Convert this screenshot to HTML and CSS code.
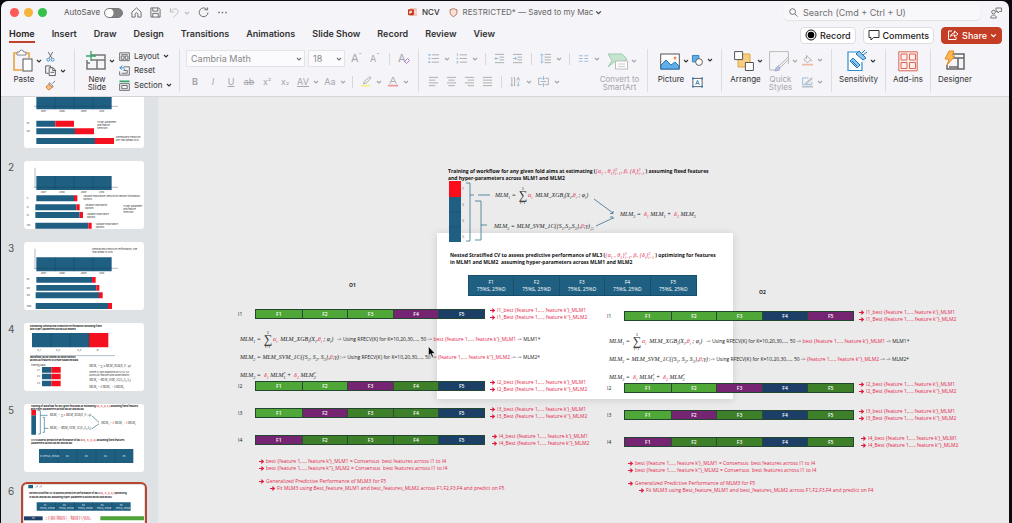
FILE: index.html
```html
<!DOCTYPE html>
<html lang="en">
<head>
<meta charset="utf-8">
<title>NCV</title>
<link rel="stylesheet" href="styles.css">
</head>
<body>
<svg class="defs" aria-hidden="true">
  <symbol id="chev" viewBox="0 0 6 6"><path d="M1 2l2 2 2-2" fill="none" stroke="currentColor" stroke-width="1.1"/></symbol>
  <symbol id="arrow" viewBox="0 0 5 5"><path d="M0 2.500h4M2.300.6l2 1.900-2 1.900" fill="none" stroke="currentColor" stroke-width="1.200"/></symbol>
</svg>
<div class="window">
  <header class="titlebar">
    <div class="lights"><i class="red"></i><i class="amber"></i><i class="green"></i></div>
    <div class="quick">
      <label class="autosave">AutoSave <input type="checkbox"></label>
      <button aria-label="Home"><svg viewBox="0 0 12 12"><path d="M1 5.500L6 1l5 4.500V11H7.500V8a1.500 1.500 0 0 0-3 0v3H1z"/></svg></button>
      <button aria-label="Save"><svg viewBox="0 0 12 12"><path d="M1 1h8.500L11 2.500V11H1zM3 1v3.500h5.500V1M3 11V7h6v4"/></svg></button>
      <button class="dim" aria-label="Undo"><svg viewBox="0 0 12 12"><path d="M1.500 1v4.500H6M1.500 5C4 1.500 9 1 9.800 4 10.500 6.500 8 8.500 5 11"/></svg></button>
      <button class="dim mini" aria-label="Undo options"><svg viewBox="0 0 6 6"><use href="#chev"/></svg></button>
      <button aria-label="Repeat"><svg viewBox="0 0 12 12"><path d="M10 3a4.800 4.800 0 1 0 .9 3M7 3h3.500V.5"/></svg></button>
      <button aria-label="More"><svg viewBox="0 0 12 12"><path d="M1.500 6h1.500M5.200 6h1.500M9 6h1.500" stroke-width="1.600"/></svg></button>
    </div>
    <div class="doc">
      <svg viewBox="0 0 10 10"><rect x="2" width="8" height="9" rx="1" fill="#f2c5b8"/><rect y="1.500" width="6.500" height="6.500" rx="1" fill="#c3371d"/><path d="M2 6.500v-3h2v1.500H2M7.500 4.500h2" stroke="#fff" fill="none"/></svg>
      <b>NCV</b>
      <svg viewBox="0 0 10 10"><path d="M5 .7l3.800 1.200v3C8.800 7 7 8.700 5 9.500 3 8.700 1.200 7 1.200 4.900v-3z" fill="#f8e3d8" stroke="#b4694a"/></svg>
      <span>RESTRICTED* — Saved to my Mac</span>
      <svg class="c" viewBox="0 0 6 6"><use href="#chev"/></svg>
    </div>
    <label class="search"><svg viewBox="0 0 10 10"><circle cx="4" cy="4" r="3.200"/><path d="M6.400 6.400L9.500 9.500"/></svg><input type="text" aria-label="Search" placeholder="Search (Cmd + Ctrl + U)"></label>
    <button class="people" aria-label="Presence"><svg viewBox="0 0 12 12"><circle cx="3.500" cy="5" r="1.800"/><path d="M.7 11c0-4 5.600-4 5.600 0zM6 1h5.500v3.500H9.500L8 6V4.500H6z"/></svg></button>
  </header>

  <nav class="tabs">
    <a class="on" href="#">Home</a><a href="#">Insert</a><a href="#">Draw</a><a href="#">Design</a><a href="#">Transitions</a><a href="#">Animations</a><a href="#">Slide Show</a><a href="#">Record</a><a href="#">Review</a><a href="#">View</a>
    <div class="actions">
      <button><svg viewBox="0 0 12 12"><circle cx="6" cy="6" r="5" fill="none" stroke="#111"/><circle cx="6" cy="6" r="3.300" fill="#000"/></svg>Record</button>
      <button><svg viewBox="0 0 12 12"><path d="M1 1.500h10v7H5.500L3 11V8.500H1z" fill="none" stroke="#333"/></svg>Comments</button>
      <button class="share"><svg viewBox="0 0 12 12"><path d="M5 2H1.500v8.500H9V8M3.500 7.500C4 5 5.500 4 7.500 4V2L11 5 7.500 7.800V6C6 6 4.500 6.300 3.500 7.500z" fill="none" stroke="#fff"/></svg>Share<svg class="c" viewBox="0 0 6 6"><use href="#chev"/></svg></button>
    </div>
  </nav>

  <div class="ribbon">
    <section class="group clip">
      <button class="big"><span><svg viewBox="0 0 20 22"><path d="M4 3H1v17h8M13 3h3v5" fill="none" stroke="#e8a33d" stroke-width="1.600"/><path d="M4 2h2.500a2 2 0 0 1 4 0H13v3H4z" fill="#fff" stroke="#888"/><rect x="10" y="9" width="9" height="12" fill="#fff" stroke="#555"/></svg><svg class="c" viewBox="0 0 6 6"><use href="#chev"/></svg></span>Paste</button>
      <div class="stack">
        <button aria-label="Cut"><svg viewBox="0 0 12 12"><path d="M3.500 1l4 7M8.500 1l-4 7" fill="none" stroke="#666"/><circle cx="3.700" cy="9.500" r="1.600" fill="none" stroke="#3a8fc8"/><circle cx="8.300" cy="9.500" r="1.600" fill="none" stroke="#3a8fc8"/></svg></button>
        <button aria-label="Copy"><svg viewBox="0 0 12 12"><path d="M4 9H.7V1H6v2M4.500 3H9l2.300 2.500v6H4.500zM8.500 3v3h3M6 8h4" fill="none" stroke="#555"/></svg><svg class="c" viewBox="0 0 6 6"><use href="#chev"/></svg></button>
        <button aria-label="Format painter"><svg viewBox="0 0 12 12"><path d="M11 1L8 4M5 3l4 4-1.500 1L4 4.500z" fill="none" stroke="#777"/><path d="M4 5L1 7.500 4 11l4-3z" fill="#f6c18f" stroke="#d9761e"/></svg></button>
      </div>
    </section>
    <section class="group slides">
      <button class="big"><span><svg viewBox="0 0 20 22"><path d="M5 5h14v14H1V10M5 10h14M11 10v9M1 13h3" fill="none" stroke="#777" stroke-width="1.500"/><path d="M5 1v10M0 6h10" stroke="#32a567" stroke-width="1.300"/></svg><svg class="c" viewBox="0 0 6 6"><use href="#chev"/></svg></span>New<br>Slide</button>
      <div class="stack wide">
        <button><svg viewBox="0 0 12 12"><path d="M.7 2h10.600v8.500H.7zM2.500 4h7M2.500 5.500h3v3.500h-3zM6.800 5.500h3v3.500h-3z" fill="none" stroke="#666"/></svg>Layout<svg class="c" viewBox="0 0 6 6"><use href="#chev"/></svg></button>
        <button><svg viewBox="0 0 12 12"><path d="M5 2h6.300v9H.7V7M5 6h4v3H3" fill="none" stroke="#666"/><path d="M3.500.5L1 3l2.500 2.300M1 3h3c2 0 2 2 2 3" fill="none" stroke="#2b88c8"/></svg>Reset</button>
        <button><svg viewBox="0 0 12 12"><path d="M.5.500h11v2H.5z" fill="#32a567"/><path d="M.7 4h10.600v7.300H.7zM3 6h6v3.500H3z" fill="none" stroke="#666"/></svg>Section<svg class="c" viewBox="0 0 6 6"><use href="#chev"/></svg></button>
      </div>
    </section>
    <section class="group font dim">
      <div class="row">
        <span class="combo name"><select aria-label="Font"><option>Cambria Math</option></select><svg class="c" viewBox="0 0 6 6"><use href="#chev"/></svg></span>
        <span class="combo size"><select aria-label="Font size"><option>18</option></select><svg class="c" viewBox="0 0 6 6"><use href="#chev"/></svg></span>
        <button class="ltr">A<sup>ˆ</sup></button><button class="ltr small">A<sup>ˇ</sup></button><i class="bar"></i>
        <button class="ltr">A<svg class="tiny" viewBox="0 0 6 6"><path d="M3.500.5l2 2-3 3-2-2z" fill="none" stroke="#b77cc4"/></svg></button>
      </div>
      <div class="row fmt">
        <button><b>B</b></button><button><em>I</em></button><button><u>U</u></button><button><s>ab</s></button><button>x<sup>²</sup></button><button>x<sub>₂</sub></button><button><u>AV</u></button><svg class="c" viewBox="0 0 6 6"><use href="#chev"/></svg><button>Aa</button><svg class="c" viewBox="0 0 6 6"><use href="#chev"/></svg><i class="bar"></i>
        <button aria-label="Highlight"><svg viewBox="0 0 12 12"><path d="M0 9.500h10v2H0z" fill="#f3f08a"/><path d="M10 .7L4 5.500l-1.500 3L6 7.500l5-5.500z" fill="none" stroke="#aaa"/></svg></button><svg class="c" viewBox="0 0 6 6"><use href="#chev"/></svg>
        <button aria-label="Font color"><svg viewBox="0 0 12 12"><path d="M2 8.500L5.500 1 9 8.500M3.300 6h4.400" fill="none" stroke="#aaa"/><path d="M0 9.500h11v2H0z" fill="#e99a9a"/></svg></button><svg class="c" viewBox="0 0 6 6"><use href="#chev"/></svg>
      </div>
    </section>
    <section class="group para dim">
      <div class="row">
        <button aria-label="Bullets"><svg viewBox="0 0 12 12"><path d="M4 2h8M4 6h8M4 10h8"/><path d="M.5 2h2M.5 6h2M.5 10h2" stroke="#8db9dc" stroke-width="1.800"/></svg></button><svg class="c" viewBox="0 0 6 6"><use href="#chev"/></svg>
        <button aria-label="Numbering"><svg viewBox="0 0 12 12"><path d="M4 2h8M4 6h8M4 10h8"/><path d="M1.500.5v2.500M.7 5.500h1v1h-1M.7 9h1v2h-1" stroke="#8db9dc"/></svg></button><svg class="c" viewBox="0 0 6 6"><use href="#chev"/></svg><i class="bar"></i>
        <button aria-label="Decrease indent"><svg viewBox="0 0 12 12"><path d="M1 1.500h10M6 4.500h5M6 7.500h5M1 10.500h10"/><path d="M5 6H1M2.500 4.500L1 6l1.500 1.500" stroke="#8db9dc"/></svg></button>
        <button aria-label="Increase indent"><svg viewBox="0 0 12 12"><path d="M1 1.500h10M6 4.500h5M6 7.500h5M1 10.500h10"/><path d="M1 6h4M3.500 4.500L5 6 3.500 7.500" stroke="#8db9dc"/></svg></button><i class="bar"></i>
        <button aria-label="Line spacing"><svg viewBox="0 0 12 12"><path d="M5 1.500h7M5 4.500h7M5 7.500h7M5 10.500h7"/><path d="M2 1v10M.5 2.500L2 1l1.500 1.500M.5 9.500L2 11l1.500-1.500" stroke="#8db9dc"/></svg></button><svg class="c" viewBox="0 0 6 6"><use href="#chev"/></svg><i class="bar"></i>
        <button aria-label="Columns"><svg viewBox="0 0 12 12"><path d="M1 3h4M1 6h4M1 9h4M7 3h4M7 6h4M7 9h4" stroke="#8db9dc"/></svg></button><svg class="c" viewBox="0 0 6 6"><use href="#chev"/></svg>
      </div>
      <div class="row aligns">
        <button aria-label="Align left"><svg viewBox="0 0 12 12"><path d="M1 1.500h10M1 4.500h7M1 7.500h10M1 10.500h7"/></svg></button>
        <button aria-label="Center"><svg viewBox="0 0 12 12"><path d="M1 1.500h10M2.500 4.500h7M1 7.500h10M2.500 10.500h7"/></svg></button>
        <button aria-label="Align right"><svg viewBox="0 0 12 12"><path d="M1 1.500h10M4 4.500h7M1 7.500h10M4 10.500h7"/></svg></button>
        <button aria-label="Justify"><svg viewBox="0 0 12 12"><path d="M1 1.500h10M1 4.500h10M1 7.500h10M1 10.500h10"/></svg></button><i class="bar"></i>
        <button aria-label="Text direction"><svg viewBox="0 0 12 12"><path d="M2 1v10M5 1v10M.5 9.500L2 11l1.500-1.500M7.500 5L9 1.500 10.500 5"/><path d="M9 6v5M7.500 9.500L9 11l1.500-1.500" stroke="#8db9dc"/></svg></button><svg class="c" viewBox="0 0 6 6"><use href="#chev"/></svg>
        <button aria-label="Align text"><svg viewBox="0 0 12 12"><path d="M4 2.500H.7v7H4M8 2.500h3.300v7H8M3 6h6"/><path d="M6 0v4M6 8v4M4.500 2.500L6 4l1.500-1.500M4.500 9.500L6 8l1.500 1.500" stroke="#8db9dc"/></svg></button><svg class="c" viewBox="0 0 6 6"><use href="#chev"/></svg>
      </div>
    </section>
    <button class="big dim smart"><span><svg viewBox="0 0 20 22"><path d="M0 4h14l5 5-4 3H6l-6 5 4-6.500z" fill="#c5e5cf" stroke="#9fcbb0"/><rect x="7.500" y="11" width="12" height="8" fill="#fff" stroke="#bbb"/><path d="M10 14h7M10 16.500h7" stroke="#ccc"/></svg><svg class="c" viewBox="0 0 6 6"><use href="#chev"/></svg></span>Convert to<br>SmartArt</button>
    <section class="group insert">
      <button class="big"><span><svg viewBox="0 0 20 22"><rect x=".7" y="4" width="18.600" height="15" fill="#fff" stroke="#555"/><path d="M1 15l5-5 5 5 4-3 4 4v3H1z" fill="#62aee6" stroke="#2377b8"/><circle cx="15" cy="8" r="1.500" fill="#f08b5a"/></svg><svg class="c" viewBox="0 0 6 6"><use href="#chev"/></svg></span>Picture</button>
      <div class="pair">
        <button aria-label="Shapes"><svg viewBox="0 0 12 12"><path d="M.5.500h7v7h-7z" fill="#62aee6" stroke="#2b7fc0"/><circle cx="7.700" cy="7.700" r="3.700" fill="#fff" stroke="#555"/></svg><svg class="c" viewBox="0 0 6 6"><use href="#chev"/></svg></button>
        <button aria-label="Text box"><svg viewBox="0 0 12 12"><rect x="1" y="1.500" width="10" height="9" fill="#fff" stroke="#555"/><path d="M4 8.500L6 3.500l2 5M4.700 7h2.600" fill="none" stroke="#2b7fc0"/><path d="M0 .500h2v2H0zM10 .500h2v2h-2zM0 9.500h2v2H0zM10 9.500h2v2h-2z" fill="#2b7fc0"/></svg></button>
      </div>
    </section>
    <section class="group arrange">
      <button class="big"><span><svg viewBox="0 0 20 22"><path d="M4 4h12v13H4z" fill="#f7cf83" stroke="#e2a641"/><path d="M.6 1.600h8v8h-8zM11.400 12.500h8v8h-8z" fill="#fff" stroke="#555"/></svg><svg class="c" viewBox="0 0 6 6"><use href="#chev"/></svg></span>Arrange</button>
      <button class="big dim"><span><svg viewBox="0 0 20 22"><path d="M11 20H.6V1.600h18.800V14" fill="none" stroke="#bbb"/><path d="M19 7l-8 8-2 1 1 2 2-1 8-8z" fill="#eee" stroke="#bbb"/><path d="M6 21c1-4 2-5 4-4s0 4-4 4z" fill="#b7c3e6" stroke="#9caad4"/></svg><svg class="c" viewBox="0 0 6 6"><use href="#chev"/></svg></span>Quick<br>Styles</button>
      <div class="pair dim">
        <button aria-label="Shape fill"><svg viewBox="0 0 12 12"><path d="M2 5l4-3.500L9.500 5 6 8.500zM5 0v4M10 5v2" fill="none" stroke="#aaa"/><path d="M0 9.500h12v2H0z" fill="#f0b9a3"/></svg><svg class="c" viewBox="0 0 6 6"><use href="#chev"/></svg></button>
        <button aria-label="Shape outline"><svg viewBox="0 0 12 12"><path d="M7 1H.7v7h10V5" fill="none" stroke="#8db9dc"/><path d="M10.500 1L5 5.500 4 7l2-.5L11 2z" fill="none" stroke="#aaa"/><path d="M0 9.500h12v2H0z" fill="#b4bfc6"/></svg><svg class="c" viewBox="0 0 6 6"><use href="#chev"/></svg></button>
      </div>
    </section>
    <section class="group sens"><button class="big"><span><svg viewBox="0 0 20 22"><path d="M12 2H1v18.500h14V12" fill="#fff" stroke="#2b8fd0" stroke-width="1.200"/><path d="M3 11l3-3 7 7-3 3zM9 4l3-3 7 7-3 2z" fill="#8cc6ec" stroke="#2377b8"/><path d="M14 4l4-4M16 5l4-3M5 11l5 5" stroke="#2377b8"/></svg><svg class="c" viewBox="0 0 6 6"><use href="#chev"/></svg></span>Sensitivity</button></section>
    <section class="group addins"><button class="big"><span><svg viewBox="0 0 20 22"><path d="M.8 1.800h18.400v19H.8zM3 4h6v6H3zM11.500 4h6v6h-6zM3 12.500h6v6H3zM11.500 12.500h6v6h-6z" fill="#fdeeea" stroke="#d9685a"/></svg></span>Add-ins</button></section>
    <section class="group last"><button class="big"><span><svg viewBox="0 0 20 22"><path d="M8 4h11v15H2v-4M6 8h13M13 8v11M4 17h9" fill="none" stroke="#666" stroke-width="1.500"/><path d="M4 1h5L7 6h3L2 15l2-6H0z" fill="#f9b950" stroke="#e58a24"/></svg></span>Designer</button></section>
  </div>

  <main class="work">
    <ol class="thumbs">
      <li><span></span><svg viewBox="0 0 360 204"><path class="t" d="M37 45h226v43H37zM37 122h57v18H37zM37 145h116v18H37zM37 174h176v18H37z"/><path class="r" d="M94 122h56v18H94zM153 145h57v18h-57zM213 174h57v18h-57z"/><path class="g" d="M93 45v43M150 45v43M207 45v43M30 79h252"/><g class="tx"><text x="50" y="97">2007</text><text x="105" y="97">2008</text><text x="170" y="97">2009</text><text x="225" y="97">2010</text><text x="8" y="133">O1</text><text x="8" y="156">O2</text><text x="220" y="128">Hyper-parameter</text><text x="220" y="137">and feature</text><text x="220" y="146">selection</text><text x="275" y="175">Generalized Predictive</text><text x="275" y="184">one year ahead 2010</text></g></svg></li>
      <li><span>2</span><svg viewBox="0 0 360 204"><path class="t" d="M37 45h226v42H37zM37 103h113v18H37zM34 130h123v18H34zM34 153h133v18H34zM34 185h159v18H34z"/><path class="r" d="M150 103h10v18h-10zM157 130h10v18h-10zM167 153h10v18h-10zM193 185h10v18h-10z"/><path class="g" d="M93 45v42M150 45v42M207 45v42M30 79h252M33 20v60"/><g class="tx"><text x="50" y="97">2007</text><text x="105" y="97">2008</text><text x="170" y="97">2009</text><text x="225" y="97">2010</text><text x="8" y="115">I1</text><text x="8" y="141">I2</text><text x="8" y="164">I3</text><text x="8" y="196">I30</text><text x="178" y="109">Variable Importance (Recursive Feature Elimination)</text><text x="178" y="118">Options</text><text x="183" y="134">Variable Importance</text><text x="183" y="143">Options</text><text x="188" y="162">Variable Importance</text><text x="188" y="171">Options</text><text x="215" y="192">Variable Importance</text><text x="215" y="201">Options</text><text x="298" y="139">Hyper-parameter</text><text x="298" y="148">and feature</text><text x="298" y="157">selection</text></g></svg></li>
      <li><span>3</span><svg viewBox="0 0 360 204"><path class="t" d="M37 46h226v42H37zM37 105h167v17H37zM37 129h180v17H37zM35 151h190v18H35zM35 183h217v18H35z"/><path class="r" d="M204 105h11v17h-11zM217 129h9v17h-9zM225 151h11v18h-11zM252 183h12v18h-12z"/><path class="g" d="M93 46v42M150 46v42M207 46v42M30 79h252M33 20v60"/><g class="tx"><text x="50" y="97">2007</text><text x="105" y="97">2008</text><text x="170" y="97">2009</text><text x="225" y="97">2010</text><text x="8" y="115">O1</text><text x="8" y="140">O2</text><text x="8" y="162">O3</text><text x="8" y="194">O30</text><text x="204" y="24">Generalized Predictive Performance, one</text><text x="204" y="33">year ahead in 2010</text></g></svg></li>
      <li><span>4</span><svg viewBox="0 0 360 204"><path class="t" d="M24 30h171v43H24zM54 132h28v17H54zM54 152h28v17H54zM54 173h28v17H54z"/><path class="r" d="M195 30h58v43h-58zM82 132h28v17H82zM82 152h28v17H82zM82 173h28v17H82z"/><path class="g" d="M81 30v43M138 30v43M195 30v43M18 98h255"/><g class="tx"><text class="h" x="18" y="11">Estimating Generalized Predictive Performance assuming fixed</text><text class="h" x="18" y="20">and hyper-parameters across all models</text><text x="40" y="84">S_1</text><text x="96" y="84">S_2</text><text x="160" y="84">S_3</text><text x="218" y="84">D</text><text class="h" x="18" y="106">Workflow: MLM trained on observations</text><text class="h" x="18" y="115">across all features to create balanced data</text><text x="20" y="128">Training Data</text><text x="40" y="143">F1</text><text x="40" y="163">F2</text><text x="40" y="183">F3</text><text class="m" x="196" y="132">MLM₁ = ∑ α MLM_XGB(X, θ ; φ)</text><text x="196" y="151">where D_train balanced on S1,S2,S3</text><text x="196" y="159">across all features and observations</text><text class="m" x="196" y="173">MLM₂ = MLM_SVM_1C(S₁,S₂,S₃)</text><text class="m" x="196" y="194">MLM₃ = δ MLM₁ + δ MLM₂</text></g></svg></li>
      <li><span>5</span><svg viewBox="0 0 360 204"><path class="t" d="M22 34h14v58H22zM45 135h283v42H45z"/><path class="r" d="M22 18h14v16H22z"/><path class="g" d="M102 135v42M159 135v42M216 135v42M273 135v42"/><path class="br" d="M43 20h6v70h-6M56 40h5v45h-5M49 34h22M61 73h12M203 35l22 20M203 75l22-16"/><g class="tx"><text class="h" x="20" y="8">Training of workflow for any given fold aims at estimating <tspan class="k">(α₁, θ₁, β, δ₁)</tspan> assuming fixed features</text><text class="h" x="20" y="17">and hyper-parameters across MLM1 and MLM2</text><text class="m" x="77" y="37">MLM₁ = ∑ <tspan class="k">α</tspan> MLM_XGB(X, θ ; φ)</text><text class="m" x="77" y="75">MLM₂ = MLM_SVM_1C(S₁,S₂,S₃)</text><text class="m" x="232" y="61">MLM₃ = <tspan class="k">δ</tspan> MLM₁ + <tspan class="k">δ</tspan> MLM₂</text><text class="h" x="22" y="112">CV to assess predictive performance of ML3 <tspan class="k">(α₁, θ₁, β, δ₁)</tspan> assuming fixed features</text><text class="h" x="22" y="121">parameters across MLM1 and MLM2</text></g><g class="tx w"><text x="48" y="158">F1 (75%S, 25%D)</text><text x="126" y="158">F2</text><text x="183" y="158">F3</text><text x="240" y="158">F4</text><text x="296" y="158">F5</text></g></svg></li>
      <li class="sel"><span>6</span><svg viewBox="0 0 360 204"><path class="t" d="M13 0h14v10H13zM38 52h282v25H38z"/><path d="M0 94h56v12H0z" fill="#1d3f67"/><path d="M229 94h131v12H229z" fill="#4fa13a"/><path class="g" d="M94 52v25M151 52v25M207 52v25M264 52v25M40 0v6h-6M52 0v6h-6"/><g class="tx"><text class="h" x="16" y="28">Nested Stratified CV to assess predictive performance of ML3 <tspan class="k">(α₁, θ₁, β, δ₁)</tspan> optimizing</text><text class="h" x="16" y="38">in MLM1 and MLM2 assuming hyper-parameters across MLM1 and MLM2</text><text class="k" x="64" y="99">➔ I1_best {feature 1,…, feature k'}_MLM1</text><text class="k" x="64" y="106">➔ I1_Best {feature 1,…, feature k''}_MLM2</text></g><g class="tx w"><text x="60" y="63">F1</text><text x="48" y="71">75%S, 25%D</text><text x="117" y="63">F2</text><text x="105" y="71">75%S, 25%D</text><text x="174" y="63">F3</text><text x="162" y="71">75%S, 25%D</text><text x="230" y="63">F4</text><text x="218" y="71">75%S, 25%D</text><text x="287" y="63">F5</text><text x="275" y="71">75%S, 25%D</text><text x="24" y="103">F5</text></g></svg></li>
    </ol>

    <div class="canvas">
      <div class="slide"></div>
      <div class="head first">Training of workflow for any given fold aims at estimating (<i>{α<sub>1</sub> , θ<sub>1</sub>}<span class="lim"><small>3</small><small>i=1</small></span>, β, {δ<sub>i</sub>}<span class="lim"><small>2</small><small>i=1</small></span></i> ) assuming fixed features<br>and hyper-parameters across MLM1 and MLM2</div>
      <svg class="flow" viewBox="0 0 180 62"><path d="M0 0h12v16H0z" fill="#fb0d1b"/><path d="M0 16h12v45H0z" fill="#1f5f82"/><path d="M0 31h12M0 46h12" stroke="#184b68" stroke-width=".5"/><g fill="none" stroke="#36708f" stroke-width=".8"><path d="M17 2h4v58h-4M21 14h4M29 14h12M26 20h6v39h-6M32 44h6"/><path d="M145 18l19 14M164 30v2.500h-3M147 45l17-8M161 36h3v2"/></g><g fill="#777" font-size="4"><text x="13" y="9">F</text><text x="13" y="25">S</text><text x="13" y="41">S</text><text x="13" y="57">S</text></g></svg>
      <div class="math m1">MLM<sub>1</sub> = <span class="sum"><small>3</small>∑<small>i=1</small></span><i>α<sub>i</sub></i>&nbsp; MLM_XGB<sub>i</sub>(X<sub>i</sub>,<i>θ<sub>i</sub></i> ; φ<sub>i</sub>)</div>
      <div class="math m2">MLM<sub>2</sub> = MLM_SVM_1C({S<sub>1</sub>,S<sub>2</sub>,S<sub>3</sub>},<i>β</i>;γ)<sub>,□</sub></div>
      <div class="math m3">MLM<sub>3</sub> = &nbsp;<i>δ<sub>1</sub></i> MLM<sub>1</sub> + &nbsp;<i>δ<sub>2</sub></i> MLM<sub>2</sub></div>
      <div class="head second">Nested Stratified CV to assess predictive performance of ML3 (<i>{α<sub>1</sub> , θ<sub>1</sub>}<span class="lim"><small>3</small><small>i=1</small></span>, β, {δ<sub>i</sub>}<span class="lim"><small>2</small><small>i=1</small></span></i> ) optimizing for features<br>in MLM1 and MLM2&nbsp; assuming hyper-parameters across MLM1 and MLM2</div>
      <div class="split"><span>F1<br>75%S, 25%D</span><span>F2<br>75%S, 25%D</span><span>F3<br>75%S, 25%D</span><span>F4<br>75%S, 25%D</span><span>F5<br>75%S, 25%D</span></div>

      <section class="outer o1">
        <h3>O1</h3>
        <div class="iter"><span>I1</span><div class="folds"><b class="l">F1</b><b class="l">F2</b><b class="l">F3</b><b class="p">F4</b><b class="n">F5</b></div><p><svg viewBox="0 0 5 5"><use href="#arrow"/></svg>I1_best {feature 1,…, feature k'}_MLM1<br><svg viewBox="0 0 5 5"><use href="#arrow"/></svg>I1_Best {feature 1,…, feature k''}_MLM2</p></div>
        <div class="eqs">
          <div><span class="math">MLM<sub>1</sub> = <span class="sum"><small>3</small>∑<small>i=1</small></span><i>α<sub>i</sub></i>&nbsp; MLM_XGB<sub>i</sub>(X<sub>i</sub>,<i>θ<sub>i</sub></i> ; φ<sub>i</sub>)</span><span class="note">-&gt; Using RFECV(K) for K=10,20,30,…, 50 -&gt; <i>best {feature 1,…, feature k'}_MLM1</i> -&gt; MLM1*</span></div>
          <div><span class="math">MLM<sub>2</sub> = MLM_SVM_1C({S<sub>1</sub>, S<sub>2</sub>, S<sub>3</sub>},<i>β</i>;γ)</span><span class="note tight">:-&gt; Using RFECV(K) for K=10,20,30,…, 50 -&gt; <i>{feature 1,…, feature k''}_MLM2</i> -&gt; -&gt; MLM2*</span></div>
          <div><span class="math">MLM<sub>3</sub> = &nbsp;<i>δ<sub>1</sub></i> MLM<span class="lim"><small>*</small><small>1</small></span> + &nbsp;<i>δ<sub>2</sub></i> MLM<span class="lim"><small>*</small><small>2</small></span></span></div>
        </div>
        <div class="iter"><span>I2</span><div class="folds"><b class="l">F1</b><b class="l">F2</b><b class="p">F3</b><b class="g">F4</b><b class="n">F5</b></div><p><svg viewBox="0 0 5 5"><use href="#arrow"/></svg>I2_best {feature 1,…, feature k'}_MLM1<br><svg viewBox="0 0 5 5"><use href="#arrow"/></svg>I2_Best {feature 1,…, feature k''}_MLM2</p></div>
        <div class="iter"><span>I3</span><div class="folds"><b class="l">F1</b><b class="p">F2</b><b class="g">F3</b><b class="g">F4</b><b class="n">F5</b></div><p><svg viewBox="0 0 5 5"><use href="#arrow"/></svg>I3_best {feature 1,…, feature k'}_MLM1<br><svg viewBox="0 0 5 5"><use href="#arrow"/></svg>I3_Best {feature 1,…, feature k''}_MLM2</p></div>
        <div class="iter"><span>I4</span><div class="folds"><b class="p">F1</b><b class="g">F2</b><b class="g">F3</b><b class="g">F4</b><b class="n">F5</b></div><p class="in"><svg viewBox="0 0 5 5"><use href="#arrow"/></svg>I4_best {feature 1,…, feature k'}_MLM1<br><svg viewBox="0 0 5 5"><use href="#arrow"/></svg>I4_Best {feature 1,…, feature k''}_MLM2</p></div>
        <ul class="result">
          <li><svg viewBox="0 0 5 5"><use href="#arrow"/></svg>best {feature 1,…, feature k'}_MLM1 = Consensus&nbsp; best features across I1 to I4</li>
          <li><svg viewBox="0 0 5 5"><use href="#arrow"/></svg>best {feature 1,…, feature k''}_MLM2 = Consensus&nbsp; best features across I1 to I4</li>
          <li class="gap"><svg viewBox="0 0 5 5"><use href="#arrow"/></svg>Generalized Predictive Performance of MLM3 for F5</li>
          <li class="sub"><svg viewBox="0 0 5 5"><use href="#arrow"/></svg>Fit MLM3 using Best_feature_MLM1 and best_features_MLM2 across F1,F2,F3,F4 and predict on F5</li>
        </ul>
      </section>

      <section class="outer o2">
        <h3>O2</h3>
        <div class="iter"><span>I1</span><div class="folds"><b class="l">F1</b><b class="l">F2</b><b class="l">F3</b><b class="n">F4</b><b class="p">F5</b></div><p><svg viewBox="0 0 5 5"><use href="#arrow"/></svg>I1_best {feature 1,…, feature k'}_MLM1<br><svg viewBox="0 0 5 5"><use href="#arrow"/></svg>I1_Best {feature 1,…, feature k''}_MLM2</p></div>
        <div class="eqs">
          <div><span class="math">MLM<sub>1</sub> = <span class="sum"><small>3</small>∑<small>i=1</small></span><i>α<sub>i</sub></i>&nbsp; MLM_XGB<sub>i</sub>(X<sub>i</sub>,<i>θ<sub>i</sub></i> ; φ<sub>i</sub>)</span><span class="note">-&gt; Using RFECV(K) for K=10,20,30,…, 50 -&gt; <i>best {feature 1,…, feature k'}_MLM1</i> -&gt; MLM1*</span></div>
          <div><span class="math">MLM<sub>2</sub> = MLM_SVM_1C({S<sub>1</sub>, S<sub>2</sub>, S<sub>3</sub>},<i>β</i>;γ)</span><span class="note tight">:-&gt; Using RFECV(K) for K=10,20,30,…, 50 -&gt; <i>{feature 1,…, feature k''}_MLM2</i> -&gt; -&gt; MLM2*</span></div>
          <div><span class="math">MLM<sub>3</sub> = &nbsp;<i>δ<sub>1</sub></i> MLM<span class="lim"><small>*</small><small>1</small></span> + &nbsp;<i>δ<sub>2</sub></i> MLM<span class="lim"><small>*</small><small>2</small></span></span></div>
        </div>
        <div class="iter"><span>I2</span><div class="folds"><b class="l">F1</b><b class="l">F2</b><b class="p">F3</b><b class="n">F4</b><b class="g">F5</b></div><p><svg viewBox="0 0 5 5"><use href="#arrow"/></svg>I2_best {feature 1,…, feature k'}_MLM1<br><svg viewBox="0 0 5 5"><use href="#arrow"/></svg>I2_Best {feature 1,…, feature k''}_MLM2</p></div>
        <div class="iter"><span>I3</span><div class="folds"><b class="l">F1</b><b class="p">F2</b><b class="g">F3</b><b class="n">F4</b><b class="g">F5</b></div><p><svg viewBox="0 0 5 5"><use href="#arrow"/></svg>I3_best {feature 1,…, feature k'}_MLM1<br><svg viewBox="0 0 5 5"><use href="#arrow"/></svg>I3_Best {feature 1,…, feature k''}_MLM2</p></div>
        <div class="iter"><span>I4</span><div class="folds"><b class="p">F1</b><b class="g">F2</b><b class="g">F3</b><b class="n">F4</b><b class="g">F5</b></div><p class="in"><svg viewBox="0 0 5 5"><use href="#arrow"/></svg>I4_best {feature 1,…, feature k'}_MLM1<br><svg viewBox="0 0 5 5"><use href="#arrow"/></svg>I4_Best {feature 1,…, feature k''}_MLM2</p></div>
        <ul class="result">
          <li><svg viewBox="0 0 5 5"><use href="#arrow"/></svg>best {feature 1,…, feature k'}_MLM1 = Consensus&nbsp; best features across I1 to I4</li>
          <li><svg viewBox="0 0 5 5"><use href="#arrow"/></svg>best {feature 1,…, feature k''}_MLM2 = Consensus&nbsp; best features across I1 to I4</li>
          <li class="gap"><svg viewBox="0 0 5 5"><use href="#arrow"/></svg>Generalized Predictive Performance of MLM3 for F5</li>
          <li class="sub"><svg viewBox="0 0 5 5"><use href="#arrow"/></svg>Fit MLM3 using Best_feature_MLM1 and best_features_MLM2 across F1,F2,F3,F4 and predict on F4</li>
        </ul>
      </section>
      <svg class="cursor" viewBox="0 0 8 12"><path d="M.5.500v9l2-1.700 1.500 3.500 1.500-.7L4 7.500h3z" fill="#000" stroke="#fff" stroke-width=".5"/></svg>
    </div>
  </main>
</div>
</body>
</html>
```
FILE: styles.css
```css
* { box-sizing: border-box; }
html, body { height: 100%; }
body { margin: 0; padding: 1px 3px 0 1px; background: #0b0b0d; font: 8px/9px Inter, "Liberation Sans", sans-serif; color: #333; overflow: hidden; }
button { font: inherit; color: inherit; background: none; border: 0; padding: 0; margin: 0; display: flex; align-items: center; }
svg { flex: none; display: block; overflow: visible; }
.defs { position: absolute; width: 0; height: 0; }
.window { height: 100%; display: flex; flex-direction: column; background: #f5f4f8; border-radius: 7px 7px 0 0; overflow: hidden; }
.c { width: 6px; height: 6px; }

.titlebar { height: 23px; flex: none; display: flex; align-items: center; padding: 0 7px 0 9px; position: relative; }
.lights { display: flex; gap: 5px; }
.lights i { width: 9px; height: 9px; border-radius: 50%; }
.red { background: #fc5b57; }
.amber { background: #f5b43c; }
.green { background: #35c24a; }
.quick { display: flex; align-items: center; gap: 8px; margin-left: 17px; color: #666; }
.quick svg { width: 11px; height: 11px; fill: none; stroke: currentColor; }
.quick .dim { color: #bbb; }
.quick .mini { margin-left: -4px; }
.quick .mini svg { width: 6px; height: 6px; }
.autosave { display: flex; align-items: center; gap: 4px; color: #555; }
.autosave input { appearance: none; margin: 0; width: 19px; height: 10px; border-radius: 5px; border: 1px solid #777; background: radial-gradient(circle at 4px 4px, #fff 4px, #808080 5px); }
.doc { position: absolute; left: 407px; top: 6px; display: flex; align-items: center; gap: 5px; font-size: 8px; line-height: 11px; color: #666; white-space: nowrap; }
.doc b { font-weight: 500; color: #333; margin-right: 4px; }
.doc svg { width: 9px; height: 9px; }
.doc .c { width: 7px; height: 7px; margin-left: -3px; color: #444; }
.search { margin-left: auto; width: 196px; height: 15px; display: flex; align-items: center; gap: 5px; padding: 0 5px; border-radius: 4px; background: #f8f7fa; box-shadow: 0 1px 1px #e2e1e6; margin-right: 10px; }
.search svg { width: 9px; height: 9px; fill: none; stroke: #666; }
.search input { flex: 1; min-width: 0; border: 0; padding: 0; background: none; font: 9px/11px Inter, sans-serif; color: #555; }
.search input::placeholder { color: #707070; opacity: 1; }
.people svg { width: 12px; height: 12px; fill: none; stroke: #777; }

.tabs { height: 22px; flex: none; display: flex; align-items: center; gap: 17px; padding: 0 7px 0 8px; font-size: 9px; line-height: 11px; font-weight: 600; }
.tabs a { color: #333; text-decoration: none; padding: 2px 0 2px; margin-bottom: 1px; border-bottom: 2px solid transparent; white-space: nowrap; }
.tabs .on { color: #222; border-color: #c0412a; }
.actions { margin-left: auto; display: flex; gap: 7px; font-weight: 500; }
.actions button { height: 17px; padding: 0 4px; gap: 3px; background: #fff; border: 1px solid #dddce1; border-radius: 4px; color: #222; }
.actions svg { width: 12px; height: 12px; }
.actions .share { background: #c43e25; border-color: #c43e25; color: #fff; padding: 0 4px 0 5px; }
.actions .share .c { width: 7px; height: 7px; }

.ribbon { height: 51px; flex: none; display: flex; align-items: flex-start; padding-top: 3px; border-bottom: 1px solid #d5d5d8; background: #f5f4f8; }
.group { height: 43px; flex: none; border-right: 1px solid #dedde2; display: flex; }
.group.last { border: 0; padding-left: 7px; }
.big { flex-direction: column; align-items: center; line-height: 8px; text-align: center; align-self: flex-start; color: #333; white-space: nowrap; }
.big span { display: flex; align-items: center; gap: 3px; height: 24px; margin-bottom: 2px; }
.big span svg:first-child { width: 20px; height: 22px; }
.big span .c { margin-right: -6px; }
.dim, .big.dim { color: #a6a5aa; }
.stack { display: flex; flex-direction: column; justify-content: space-between; padding: 1px 0; }
.stack svg, .pair svg { width: 11px; height: 11px; }
.stack button, .pair button { gap: 4px; height: 12px; }
.stack .c, .pair .c { width: 6px; height: 6px; }
.clip { width: 74px; padding-left: 12px; gap: 10px; }
.clip .big, .slides .big { width: 22px; }
.slides { width: 105px; padding-left: 11px; gap: 11px; }
.font { width: 239px; flex-direction: column; padding: 1px 0 0 6px; gap: 5px; }
.row { display: flex; align-items: center; height: 17px; }
.combo { position: relative; display: flex; align-items: center; margin-right: 3px; height: 17px; background: #fbfbfd; border: 1px solid #e4e3e8; }
.combo select { appearance: none; width: 100%; height: 15px; border: 0; background: none; padding: 0 12px 0 4px; margin: 0; font: 9px/11px Inter, sans-serif; color: #888; }
.combo .c { position: absolute; right: 2px; top: 5px; color: #777; }
.name { width: 119px; }
.size { width: 37px; }
.ltr { width: 19px; font-size: 11px; padding-left: 3px; }
.ltr sup { font-size: 8px; line-height: 4px; align-self: flex-start; }
.ltr.small { font-size: 9px; }
.tiny { width: 6px; height: 6px; margin: 4px 0 0 -2px; }
.bar { width: 1px; height: 12px; background: #d8d7dc; margin: 0 5px 0 3px; }
.row + .row { margin-top: 1px; }
.fmt button { width: 18px; justify-content: center; font-size: 9px; }
.fmt sup, .fmt sub { font-size: 7px; line-height: 4px; }
.fmt button svg { width: 11px; height: 11px; }
.fmt .c { margin: 0 2px 0 1px; }
.fmt .bar { margin: 0 4px; }
.para { width: 180px; flex-direction: column; gap: 5px; padding: 1px 0 0 9px; border: 0; }
.para button svg { width: 11px; height: 11px; fill: none; stroke: #aaa; }
.para .row { gap: 7px; }
.para .row > .c { margin: 0 -1px 0 -2px; }
.para .bar { margin: 0 1px; }
.smart { width: 48px; flex: none; padding-right: 7px; border: 0; }
.insert { border-left: 1px solid #dedde2; width: 75px; padding-left: 9px; gap: 7px; }
.pair { display: flex; flex-direction: column; gap: 10px; padding-top: 5px; }
.insert .big { width: 28px; }
.arrange { width: 110px; padding-left: 10px; gap: 8px; }
.arrange .big { width: 27px; }
.sens { width: 54px; justify-content: center; }
.addins { width: 45px; justify-content: center; }

.work { flex: 1; min-height: 0; display: flex; background: #ebebec; }
.thumbs { width: 160px; flex: none; margin: 0; padding: 0; list-style: none; overflow: hidden; background: #dee2e5; border-right: 3px solid #e9eaec; display: flex; flex-direction: column; gap: 13px; }
.thumbs li { flex: none; display: flex; align-items: flex-start; padding-left: 7px; font-size: 10px; line-height: 12px; color: #555; }
.thumbs li:first-child { margin-top: -17px; }
.thumbs li > span { width: 16px; }
.thumbs svg { width: 120px; height: 68px; background: #fff; border-radius: 3px; overflow: hidden; }
.sel svg { outline: 2px solid #b8452f; outline-offset: 1px; }
.t { fill: #1f5f82; }
.r { fill: #f5101f; }
.g { stroke: #17384c; fill: none; }
.br { stroke: #36708f; stroke-width: 2; fill: none; }
.tx { font-size: 7px; fill: #333; }
.tx .h { font-weight: 700; font-size: 7px; fill: #111; }
.tx .m { font-family: "Liberation Serif", serif; font-style: italic; font-size: 9px; }
.tx .k { fill: #e0364d; }
.tx.w { fill: #fff; }

.canvas { flex: 1; position: relative; overflow: hidden; font: 5px/7px "Open Sans", "Liberation Sans", sans-serif; color: #222; white-space: nowrap; }
.canvas i { color: #e5284a; }
.slide { position: absolute; left: 276px; top: 136px; width: 296px; height: 166px; background: #fff; box-shadow: 0 1px 8px #0002; }
.head { position: absolute; font-weight: 700; color: #111; }
.head i { font-family: "Liberation Serif", serif; font-weight: 400; font-size: 6px; }
.canvas sub, .canvas sup { font-size: 4px; line-height: 0; }
.lim { display: inline-flex; flex-direction: column; vertical-align: middle; margin: -3px 0; }
.lim small { font-size: 4px; line-height: 4px; }
.first { left: 287px; top: 71px; }
.second { left: 289px; top: 155px; }
.flow { position: absolute; left: 288px; top: 84px; width: 180px; height: 62px; }
.math { font: italic 6px/8px "Liberation Serif", serif; color: #222; }
.canvas > .math { position: absolute; }
.m1 { left: 334px; top: 94px; }
.m2 { left: 333px; top: 125px; }
.m3 { left: 459px; top: 113px; }
.sum { display: inline-flex; flex-direction: column; align-items: center; vertical-align: middle; font: 12px/9px "Liberation Serif", serif; margin: -8px 1px; }
.sum small { font-size: 4px; line-height: 5px; }
.split { position: absolute; left: 307px; top: 178px; width: 229px; height: 21px; display: grid; grid-template-columns: repeat(5, 1fr); background: #1f5f82; border: 1px solid #17506f; color: #fff; text-align: center; align-items: center; }
.split span { border-right: 1px solid #17506f; padding: 2px 0; }
.split span:last-child { border: 0; }
.outer { position: absolute; display: flex; flex-direction: column; }
.o1 { left: 77px; top: 183px; }
.o2 { left: 446px; top: 185px; }
.outer h3 { margin: 0 0 17px 111px; font-size: 5px; line-height: 10px; }
.o2 h3 { margin: 5px 0 12px 152px; }
.iter { display: grid; grid-template-columns: 17px 230px auto; align-items: center; height: 14px; margin-bottom: 13px; }
.iter p { margin: 0 0 0 5px; color: #e5284a; }
.iter p.in { margin-left: 7px; }
.folds { display: grid; grid-template-columns: repeat(5, 1fr); border: 1px solid #24452f; }
.folds b { font-weight: 600; color: #fff; text-align: center; line-height: 8px; border-left: 1px solid #2a4a33; }
.folds b:first-child { border: 0; }
.l { background: #4fa738; }
.g.g { background: #3d8029; }
.p { background: #742471; }
.n { background: #1c3f68; }
.iter svg, .result svg { width: 5px; height: 5px; display: inline-block; margin-right: 2px; vertical-align: middle; color: #e01b40; }
.eqs { height: 57px; margin: -12px 0 0 2px; padding-top: 13px; display: flex; flex-direction: column; gap: 10px; }
.eqs > div { display: flex; height: 8px; align-items: center; }
.eqs .note { margin-left: 4px; }
.eqs .tight { margin-left: 1px; }
.note i { font-style: normal; }
.result { list-style: none; margin: -2px 0 0 21px; padding: 0; color: #e5284a; }
.result .gap { margin-top: 6px; }
.result .sub { padding-left: 11px; }
.cursor { position: absolute; left: 267px; top: 249px; width: 8px; height: 12px; }
```
